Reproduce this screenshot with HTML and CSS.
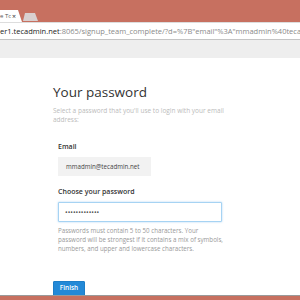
FILE: index.html
```html
<!DOCTYPE html>
<html lang="en">
<head>
  <meta charset="UTF-8" />
  <title>Your password</title>
  <link rel="stylesheet" href="styles.css">
</head>
<body>
  <div class="tabstrip">
    <div class="tab active"><span class="tab-title">e Tc</span><span class="tab-close">×</span></div>
    <div class="tab new"></div>
  </div>
  <div class="toolbar">
    <span class="host">er1.tecadmin.net</span><span class="path">:8065/signup_team_complete/?d=%7B"email"%3A"mmadmin%40teca</span>
  </div>
  <div class="page-head"></div>

  <div class="content">
    <h1>Your password</h1>
    <p class="subtitle">Select a password that you'll use to login with your email address:</p>

    <div class="form">
      <div class="field">
        <label>Email</label>
        <div class="email-box">mmadmin@tecadmin.net</div>
      </div>
      <div class="field">
        <label for="password">Choose your password</label>
        <input type="password" id="password" class="password-input" value="mattermost123" readonly>
        <p class="help">Passwords must contain 5 to 50 characters. Your<br>password will be strongest if it contains a mix of symbols,<br>numbers, and upper and lowercase characters.</p>
      </div>
    </div>

    <button class="finish">Finish</button>
  </div>

  <div class="bottom-bar"></div>
</body>
</html>
```

FILE: styles.css
```css
* {
  box-sizing: border-box;
}

body {
  margin: 0;
  width: 300px;
  height: 300px;
  overflow: hidden;
  font-family: 'Open Sans', sans-serif;
  background: #fff;
}

/* Browser chrome */
.tabstrip {
  height: 22px;
  background: #c77060;
  display: flex;
  align-items: flex-end;
}

.tab.active {
  width: 22px;
  height: 12px;
  background: #fff;
  clip-path: polygon(0 0, 18px 0, 22px 100%, 0 100%);
  display: flex;
  align-items: center;
  font-size: 6px;
  color: #555;
  white-space: nowrap;
  overflow: hidden;
}

.tab-title {
  width: 12px;
  overflow: hidden;
}

.tab-close {
  font-size: 7px;
  color: #333;
}

.tab.new {
  width: 15px;
  height: 8px;
  margin: 0 0 1px 1px;
  background: #d9cfcf;
  clip-path: polygon(2px 0, 12px 0, 15px 100%, 0 100%);
}

.toolbar {
  height: 18px;
  border-top: 1px solid #ddd;
  border-bottom: 1px solid #c4c4c4;
  display: flex;
  align-items: center;
  font-size: 7.5px;
  white-space: nowrap;
  overflow: hidden;
}

.host {
  color: #222;
}

.path {
  color: #8a8a8a;
}

.page-head {
  height: 18px;
  background: #eeeeee;
}

/* Signup form */
.content {
  height: 237px;
  overflow: hidden;
  padding: 25px 0 0 53px;
}

h1 {
  margin: 0;
  font-size: 13.5px;
  line-height: 18px;
  font-weight: 400;
  color: #333;
}

.subtitle {
  margin: 5px 0 0;
  width: 195px;
  font-size: 6.5px;
  line-height: 9px;
  color: #bbb;
}

.form {
  margin-top: 18px;
  padding-left: 5px;
}

.field + .field {
  margin-top: 11px;
}

label {
  display: block;
  margin-bottom: 5px;
  font-size: 7px;
  line-height: 10px;
  font-weight: 600;
  color: #333;
}

.email-box {
  width: 93px;
  height: 19px;
  line-height: 19px;
  padding-left: 8px;
  background: #f2f2f2;
  font-size: 6.2px;
  color: #444;
}

.password-input {
  display: block;
  width: 164px;
  height: 20px;
  margin: 0;
  padding: 0 6px;
  border: 1px solid #a6d3f3;
  border-radius: 1px;
  box-shadow: 0 0 2px rgba(102, 175, 233, 0.6);
  font-family: 'Open Sans', sans-serif;
  font-size: 7px;
  color: #555;
  outline: none;
}

.help {
  margin: 4px 0 0;
  font-size: 6.2px;
  line-height: 9px;
  color: #999;
  white-space: nowrap;
}

.finish {
  display: block;
  margin-top: 28px;
  width: 32px;
  padding: 0 0 4px;
  line-height: 12px;
  background: #2389d7;
  border: 1px solid #1d7ec8;
  border-radius: 1px;
  color: #fff;
  font-family: 'Open Sans', sans-serif;
  font-size: 6.5px;
  font-weight: 600;
}

.bottom-bar {
  height: 5px;
  border-top: 1px solid #9a9a9a;
  background: #c77060;
}
```
